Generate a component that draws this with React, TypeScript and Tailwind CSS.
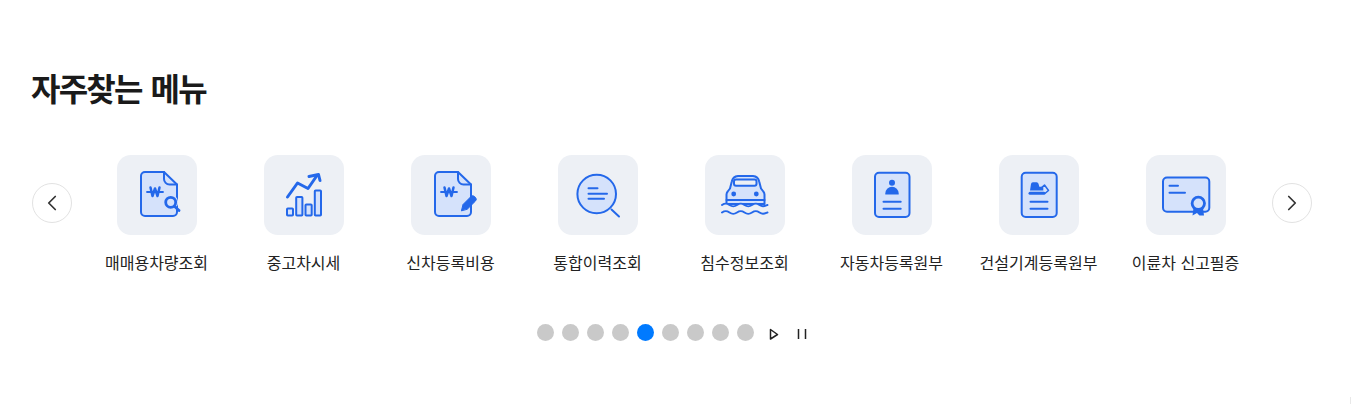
import { ChevronLeft, ChevronRight } from 'lucide-react';
import type { ReactNode } from 'react';

const BLUE = '#2468ea';
const FILL = '#d5e2fb';
const TILE = '#edf0f5';

function IconSvg({ children }: { children: ReactNode }) {
  return (
    <svg width="80" height="80" viewBox="0 0 80 80" fill="none" stroke={BLUE} strokeWidth="2" strokeLinecap="round" strokeLinejoin="round">
      {children}
    </svg>
  );
}

const docPath = 'M28 17H47L60 29.500V57a4 4 0 0 1-4 4H28a4 4 0 0 1-4-4V21a4 4 0 0 1 4-4z';

const WonMark = ({ x }: { x: number }) => (
  <g>
    <path d={`M${x} 37H${x + 16}`} strokeWidth="1.800" />
    <path d={`M${x + 3.5} 32.500L${x + 5.5} 41L${x + 8} 33.500L${x + 10.5} 41L${x + 12.5} 32.500`} strokeWidth="2.500" />
  </g>
);

const icons: ReactNode[] = [
  <IconSvg key="trade">
    <path d={docPath} fill={FILL} />
    <path d="M47 17v7a5.500 5.500 0 0 0 5.500 5.500H60" />
    <WonMark x={30} />
    <circle cx="53.700" cy="47.300" r="5" fill={FILL} stroke={FILL} strokeWidth="5" />
    <circle cx="53.700" cy="47.300" r="5" fill={FILL} strokeWidth="2.800" />
    <path d="M57.500 51.200L62 55.600" strokeWidth="2.800" />
  </IconSvg>,
  <IconSvg key="price">
    <rect x="23" y="53.500" width="6" height="7" rx="0.800" fill={FILL} />
    <rect x="32.200" y="42" width="6.200" height="18.500" rx="0.800" fill={FILL} />
    <rect x="41.500" y="49.500" width="6.200" height="11" rx="0.800" fill={FILL} />
    <rect x="50.800" y="35.500" width="6.200" height="25" rx="0.800" fill={FILL} />
    <path d="M23.500 42L33.500 28L44 33.500L53 20.500" strokeWidth="3" />
    <path d="M45 21.500L54.500 19.500L56 25.500" strokeWidth="3" />
  </IconSvg>,
  <IconSvg key="regfee">
    <path d={docPath} fill={FILL} />
    <path d="M47 17v7a5.500 5.500 0 0 0 5.500 5.500H60" />
    <WonMark x={30} />
    <path d="M50.500 55.500l1.500-6L60 41.500a2.500 2.500 0 0 1 3.500 0l1 1a2.500 2.500 0 0 1 0 3.500L56.500 54z" fill={BLUE} stroke={BLUE} strokeWidth="1" />
  </IconSvg>,
  <IconSvg key="history">
    <circle cx="38.700" cy="39" r="19.300" fill={FILL} />
    <path d="M30.500 33.300H39.500M30.500 38.700H49M30.500 43.700H46" />
    <path d="M53.500 54.500L61 61.500" />
  </IconSvg>,
  <IconSvg key="flood">
    <path d="M21.500 49V39.500a5 5 0 0 1 1.200-3L25 33.500l1.800-7a7 7 0 0 1 6.200-5.500h15a7 7 0 0 1 6.200 5.500L56 33.500l2.300 3a5 5 0 0 1 1.200 3V49z" fill={FILL} />
    <rect x="29" y="24.500" width="22.500" height="6.300" rx="2" fill={TILE} />
    <circle cx="28.700" cy="39" r="2.400" fill={BLUE} stroke="none" />
    <circle cx="51.300" cy="39" r="2.400" fill={BLUE} stroke="none" />
    <path d="M21.500 45H59.500" />
    <path d="M17 50c3-2 4.500-2 7.500 0s4.500 2 7.500 0s4.500-2 7.500 0s4.500 2 7.500 0s4.500-2 7.500 0s4 1.500 8 0V53H17z" fill={TILE} stroke="none" />
    <path d="M17 50c3-2 4.500-2 7.500 0s4.500 2 7.500 0s4.500-2 7.500 0s4.500 2 7.500 0s4.500-2 7.500 0s4 1.500 8 0" />
    <path d="M17 57.500c3-2 4.500-2 7.500 0s4.500 2 7.500 0s4.500-2 7.500 0s4.500 2 7.500 0s4.500-2 7.500 0s4 1.500 8 0" />
  </IconSvg>,
  <IconSvg key="carreg">
    <rect x="23" y="17.700" width="34.500" height="44.300" rx="4" fill={FILL} />
    <circle cx="40" cy="27.700" r="3" fill={BLUE} stroke="none" />
    <path d="M33.300 39.500v-1a6.700 6.700 0 0 1 13.400 0v1z" fill={BLUE} stroke="none" />
    <path d="M31.500 46.700H48.700M31.500 53.700H48.700" />
  </IconSvg>,
  <IconSvg key="machine">
    <rect x="22.700" y="17.700" width="35" height="44.300" rx="4" fill={FILL} />
    <path d="M31 35.500l1-6.500a2 2 0 0 1 2-1.700h3.500a2 2 0 0 1 2 1.500l.8 3h4v3.700z" fill={BLUE} stroke="none" />
    <path d="M42 33L45.500 30L49.500 35.500L46.500 38" fill="none" strokeWidth="1.500" />
    <path d="M31 38.300H45" strokeWidth="3" />
    <path d="M31.500 46.700H48.500M31.500 53.700H48.500" />
  </IconSvg>,
  <IconSvg key="twowheel">
    <rect x="17" y="22.500" width="46.300" height="34.300" rx="4" fill={FILL} />
    <path d="M23.500 30.700H32M23.500 37.700H39" />
    <path d="M47.500 53L46.500 60.500L51 58L53.500 60.500L58 60.500L57 53z" fill={BLUE} stroke="none" />
    <circle cx="52.300" cy="48.300" r="6.200" fill={FILL} stroke={BLUE} strokeWidth="2.800" />
  </IconSvg>,
];

const menus = ['매매용차량조회', '중고차시세', '신차등록비용', '통합이력조회', '침수정보조회', '자동차등록원부', '건설기계등록원부', '이륜차 신고필증'];
const dots = [0, 1, 2, 3, 4, 5, 6, 7, 8];

export default function App() {
  return (
    <div className="relative h-[404px] w-[1352px] overflow-hidden bg-white pt-[66px] text-[#1a1a1a] font-['Noto_Sans_CJK_KR','Noto_Sans',sans-serif]">
      <h2 className="pl-[31px] text-[32px] leading-[42px] font-bold tracking-[-1.8px] [word-spacing:3.5px]">자주찾는 메뉴</h2>

      <div className="mt-[47px] flex items-start pl-8">
        <button className="mt-[28px] flex h-10 w-10 shrink-0 items-center justify-center rounded-full border border-[#e2e2e2] bg-white text-[#333]">
          <ChevronLeft size={26} strokeWidth={1.6} />
        </button>
        <ul className="mr-[13px] ml-[11px] grid w-[1176px] grid-cols-8">
          {menus.map((label, i) => (
            <li key={label} className="flex flex-col items-center">
              <div className="h-20 w-20 rounded-[14px] bg-[#edf0f5]">{icons[i]}</div>
              <span className="mt-[15px] text-[16px] leading-[24px] whitespace-nowrap text-[#222] [word-spacing:1px]">{label}</span>
            </li>
          ))}
        </ul>
        <button className="mt-[28px] flex h-10 w-10 shrink-0 items-center justify-center rounded-full border border-[#e2e2e2] bg-white text-[#333]">
          <ChevronRight size={26} strokeWidth={1.6} />
        </button>
      </div>

      <div className="mt-[50px] flex items-center pl-[537px]">
        <div className="flex gap-2">
          {dots.map((d) => (
            <span key={d} className={d === 4 ? 'h-[17px] w-[17px] rounded-full bg-[#007aff]' : 'h-[17px] w-[17px] rounded-full bg-[#c9c9c9]'} />
          ))}
        </div>
        <svg className="mt-[3px] ml-[15px]" width="10" height="12" viewBox="0 0 10 12" fill="none" stroke="#222" strokeWidth="1.500">
          <path d="M1.500 1.500L8.500 6.500L1.500 11z" strokeLinejoin="round" />
        </svg>
        <svg className="mt-[3px] ml-[18px]" width="11" height="12" viewBox="0 0 11 12" fill="none" stroke="#222" strokeWidth="1.500">
          <path d="M1.500 1V11M8.500 1V11" />
        </svg>
      </div>

      <span className="absolute right-[1px] bottom-0 h-[7px] w-px bg-[#e8e8e8]" />
    </div>
  );
}
